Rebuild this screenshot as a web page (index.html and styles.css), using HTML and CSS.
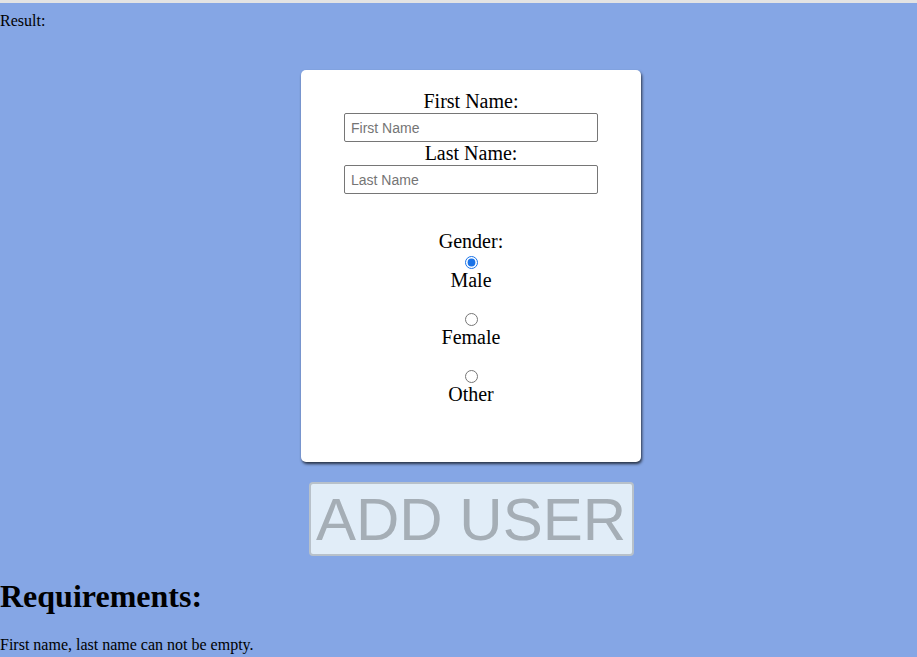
FILE: index.html
```html
<!DOCTYPE html>
<html>
<head>
<meta charset="utf-8">
<link rel="stylesheet" href="styles.css">
</head>
<body>
<div class="topbar"></div>
<div class="result">Result:</div>
<div class="app">
  <form class="card">
    <label class="lbl" for="fn">First Name:</label>
    <input class="txt" id="fn" type="text" placeholder="First Name">
    <label class="lbl" for="ln">Last Name:</label>
    <input class="txt" id="ln" type="text" placeholder="Last Name">
    <div class="gender">
      <div class="lbl">Gender:</div>
      <div class="opt">
        <input class="radio" type="radio" name="g" id="m" checked>
        <label class="lbl" for="m">Male</label>
      </div>
      <div class="opt">
        <input class="radio" type="radio" name="g" id="f">
        <label class="lbl" for="f">Female</label>
      </div>
      <div class="opt">
        <input class="radio" type="radio" name="g" id="o">
        <label class="lbl" for="o">Other</label>
      </div>
    </div>
  </form>
  <button class="add" disabled>ADD USER</button>
</div>
<h1 class="req">Requirements:</h1>
<p class="note">First name, last name can not be empty.</p>
</body>
</html>
```

FILE: styles.css
```css
html, body {
  margin: 0;
  padding: 0;
}
body {
  background: #85a6e5;
  font-family: "Liberation Serif", "Times New Roman", serif;
  font-size: 16px;
  color: #000;
  min-height: 657px;
}
.topbar {
  height: 3px;
  background: #e3e3e3;
}
.result {
  padding-top: 9px;
  line-height: 18px;
}
.app {
  display: flex;
  flex-direction: column;
  align-items: center;
  padding-left: 25px;
  padding-top: 40px;
}
.card {
  box-sizing: border-box;
  width: 340px;
  height: 392px;
  background: #fff;
  border-radius: 5px;
  box-shadow: 1px 2px 3px rgba(0, 0, 0, 0.7);
  display: flex;
  flex-direction: column;
  align-items: center;
  padding-top: 20px;
  margin: 0;
}
.lbl {
  display: block;
  font-size: 20px;
  line-height: 23px;
  text-align: center;
}
.txt {
  box-sizing: border-box;
  width: 254px;
  height: 29px;
  margin: 0;
  padding: 0 6px;
  border: 1px solid #767676;
  border-radius: 2px;
  font-family: "Liberation Sans", Arial, sans-serif;
  font-size: 14px;
  color: #000;
  background: #fff;
}
.txt::placeholder {
  color: #757575;
}
.gender {
  display: flex;
  flex-direction: column;
  align-items: center;
  margin-top: 36px;
}
.opt {
  display: flex;
  flex-direction: column;
  align-items: center;
  margin-bottom: 18px;
}
.radio {
  width: 13px;
  height: 13px;
  margin: 3px 3px 0 5px;
  accent-color: #1a73e8;
}
.add {
  box-sizing: border-box;
  margin-top: 20px;
  width: 325px;
  height: 74px;
  padding: 0 5px;
  background: #e1edf8;
  border: 2px solid #b8c1ca;
  border-radius: 4px;
  color: #a5aeb6;
  font-family: "Liberation Sans", Arial, sans-serif;
  font-size: 60px;
  line-height: 69px;
}
.req {
  font-size: 32px;
  line-height: 37px;
  margin: 22px 0 21px;
  font-weight: bold;
}
.note {
  margin: 0;
  line-height: 18px;
}
```
